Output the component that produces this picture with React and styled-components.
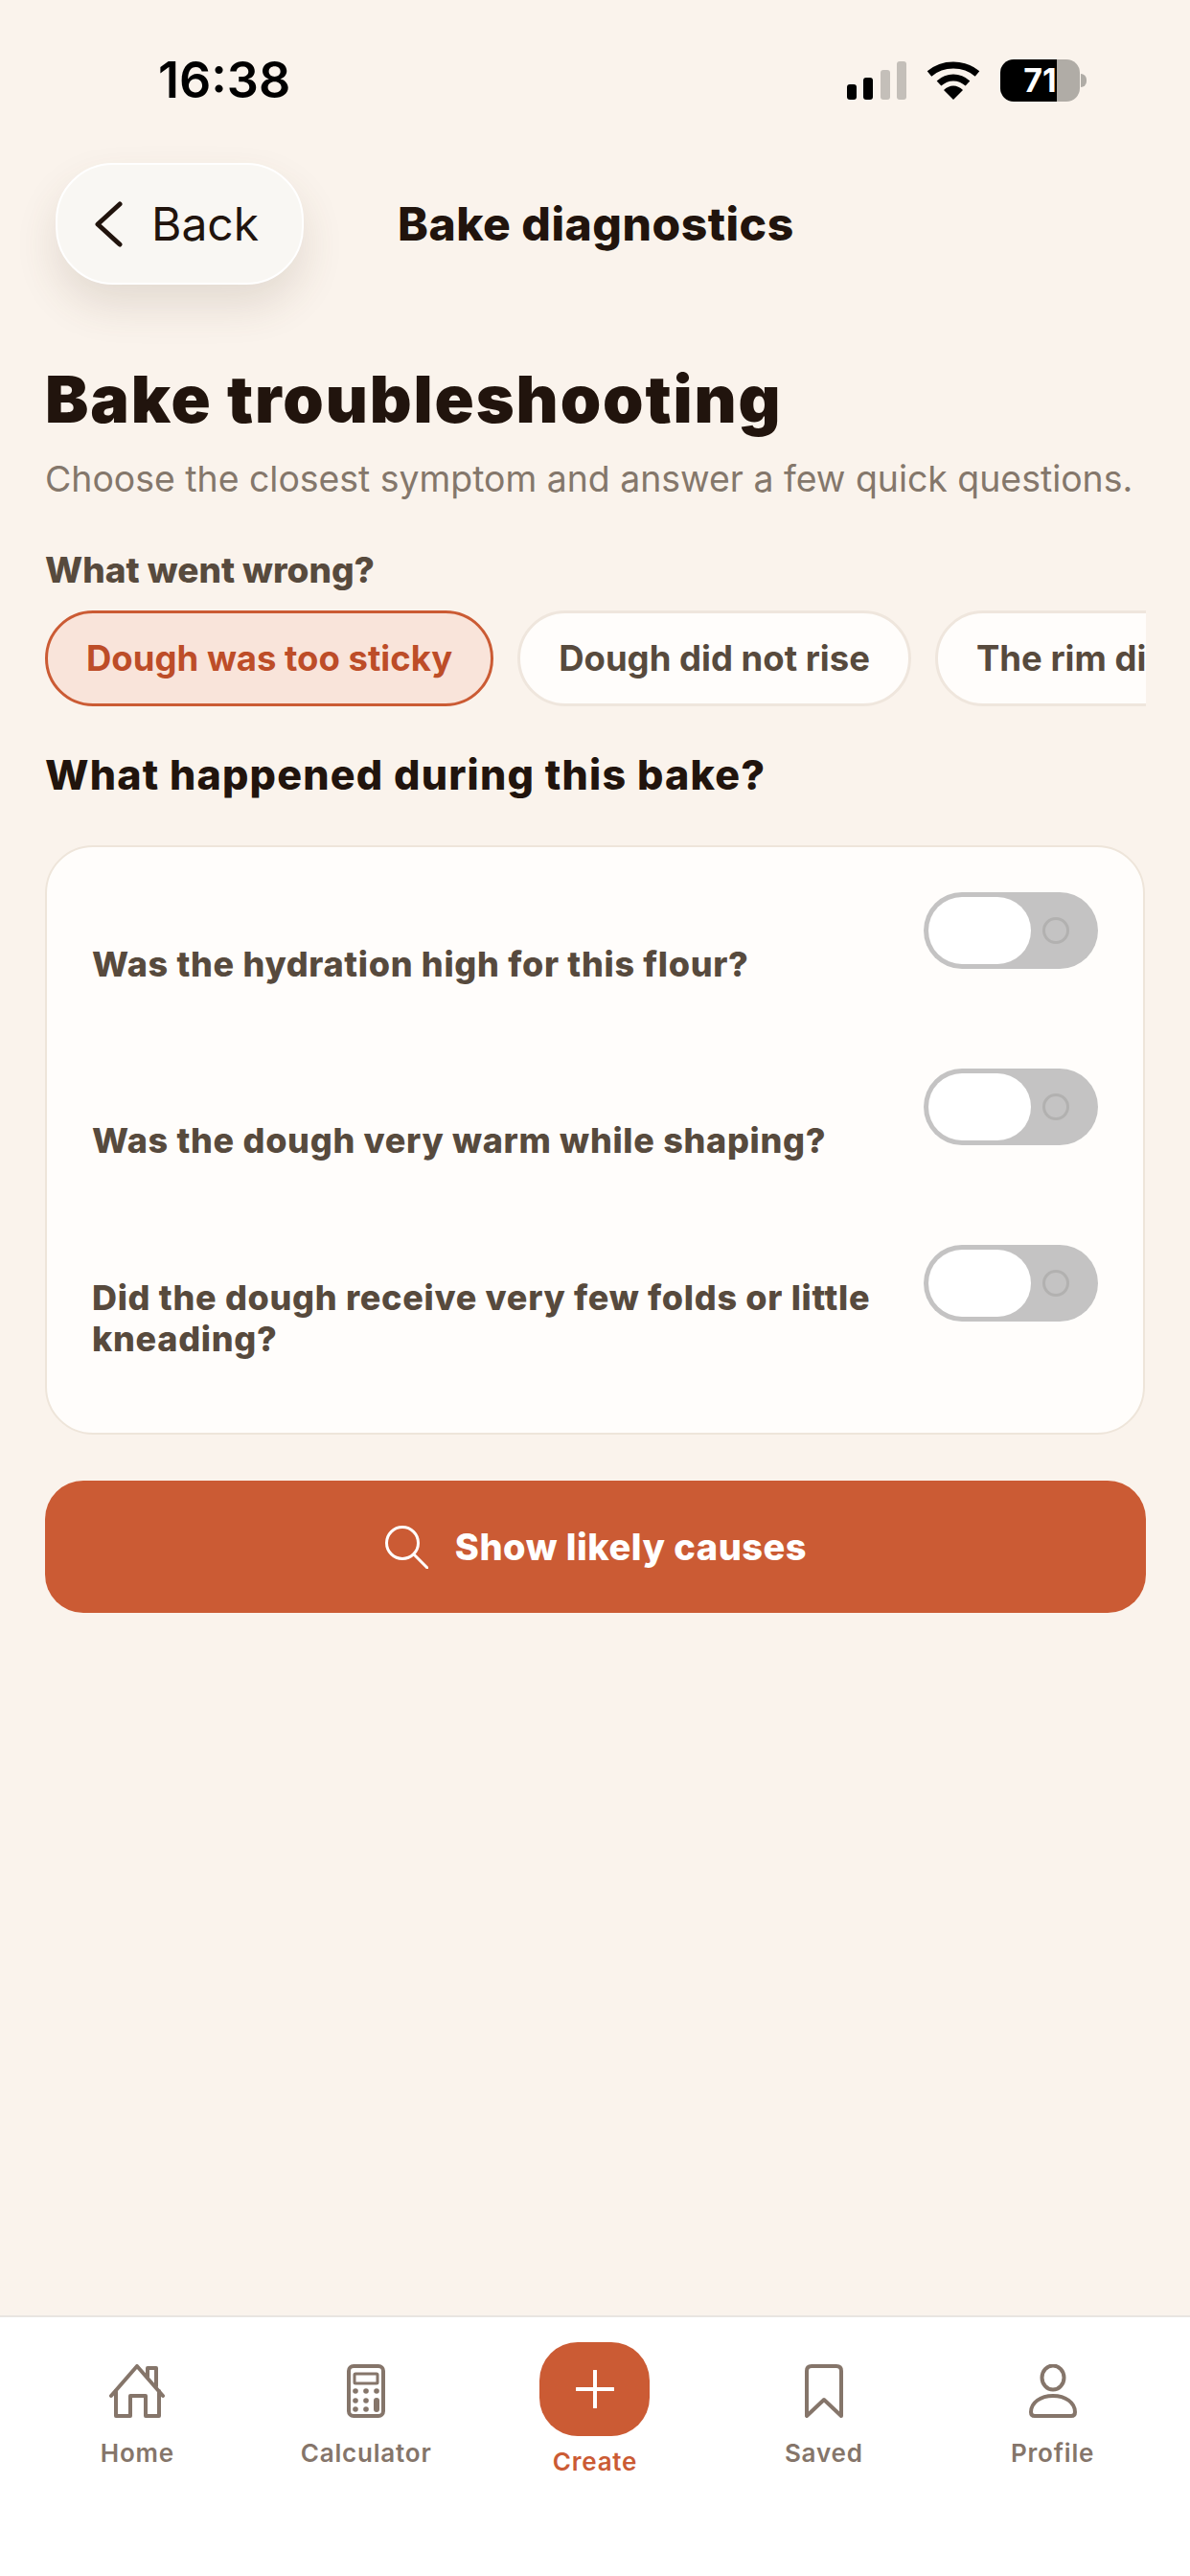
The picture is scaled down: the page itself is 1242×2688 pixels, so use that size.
import React from "react";
import styled, { createGlobalStyle } from "styled-components";

const GlobalStyle = createGlobalStyle`
  html, body {
    margin: 0;
    padding: 0;
    background: #faf3ec;
  }
  * {
    box-sizing: border-box;
  }
`;

const questions = [
  { text: "Was the hydration high for this flour?", top: 54 },
  { text: "Was the dough very warm while shaping?", top: 54 },
  { text: "Did the dough receive very few folds or little kneading?", top: 34 },
];

const App = () => {
  return (
    <Page>
      <GlobalStyle />
      <StatusBar>
        <Time>16:38</Time>
        <StatusIcons>
          <svg width="62" height="40" viewBox="0 0 62 40">
            <rect x="0" y="24" width="10" height="16" rx="3" fill="#000" />
            <rect x="17" y="17" width="10" height="23" rx="3" fill="#000" />
            <rect x="35" y="9" width="10" height="31" rx="3" fill="#c4bfb9" />
            <rect x="52" y="0" width="10" height="40" rx="3" fill="#c4bfb9" />
          </svg>
          <svg width="56" height="40" viewBox="0 0 56 40">
            <path d="M3 13 C17 1 39 1 53 13" fill="none" stroke="#000" strokeWidth="7" />
            <path d="M13 23 C22 15 34 15 43 23" fill="none" stroke="#000" strokeWidth="7" />
            <path d="M18 30 C24 24 32 24 38 30 L28 40 Z" fill="#000" />
          </svg>
          <Battery>
            71
            <BatteryNub />
          </Battery>
        </StatusIcons>
      </StatusBar>

      <Header>
        <BackButton>
          <svg width="30" height="48" viewBox="0 0 30 48">
            <path
              d="M27 3 L4 24 L27 45"
              fill="none"
              stroke="#21140d"
              strokeWidth="5"
              strokeLinecap="round"
              strokeLinejoin="round"
            />
          </svg>
          Back
        </BackButton>
        <HeaderTitle>Bake diagnostics</HeaderTitle>
      </Header>

      <Main>
        <Heading>Bake troubleshooting</Heading>
        <Subtitle>Choose the closest symptom and answer a few quick questions.</Subtitle>
        <FieldLabel>What went wrong?</FieldLabel>
        <ChipRow>
          <Chip $active>Dough was too sticky</Chip>
          <Chip>Dough did not rise</Chip>
          <Chip>The rim did not brown</Chip>
        </ChipRow>
        <SectionTitle>What happened during this bake?</SectionTitle>
        <Card>
          {questions.map((q) => (
            <QuestionRow key={q.text}>
              <QuestionText $top={q.top}>{q.text}</QuestionText>
              <Toggle>
                <Knob />
                <OffDot />
              </Toggle>
            </QuestionRow>
          ))}
        </Card>
        <PrimaryButton>
          <svg width="46" height="46" viewBox="0 0 46 46">
            <circle cx="19" cy="19" r="16.5" fill="none" stroke="#fff" strokeWidth="3" />
            <path d="M31 31 L45 45" stroke="#fff" strokeWidth="3" strokeLinecap="round" />
          </svg>
          Show likely causes
        </PrimaryButton>
      </Main>

      <TabBar>
        <Tab>
          <svg width="60" height="56" viewBox="0 0 60 56" fill="none" stroke="#85756a" strokeWidth="4" strokeLinecap="round" strokeLinejoin="round">
            <path d="M3 33 L30 2 L57 33" />
            <path d="M8 28 V54 H23 V33 H39 V54 H53 V28" />
            <path d="M41 13 V4 H50 V23" />
          </svg>
          <TabLabel>Home</TabLabel>
        </Tab>
        <Tab>
          <svg width="40" height="56" viewBox="0 0 40 56" fill="none" stroke="#85756a" strokeWidth="4" strokeLinejoin="round">
            <rect x="2" y="2" width="36" height="52" rx="5" />
            <rect x="8" y="10" width="24" height="10" rx="1" strokeWidth="3" />
            <g fill="#85756a" stroke="none">
              <circle cx="9" cy="28" r="2.8" />
              <circle cx="20" cy="28" r="2.8" />
              <circle cx="31" cy="28" r="2.8" />
              <circle cx="9" cy="38" r="2.8" />
              <circle cx="20" cy="38" r="2.8" />
              <circle cx="9" cy="47" r="2.8" />
              <circle cx="20" cy="47" r="2.8" />
              <rect x="28" y="35" width="6" height="15" rx="3" />
            </g>
          </svg>
          <TabLabel>Calculator</TabLabel>
        </Tab>
        <Tab>
          <CreateButton>
            <svg width="40" height="40" viewBox="0 0 40 40">
              <path d="M20 1 V39 M1 20 H39" stroke="#fff" strokeWidth="4" strokeLinecap="round" />
            </svg>
          </CreateButton>
          <TabLabel $active>Create</TabLabel>
        </Tab>
        <Tab>
          <svg width="40" height="56" viewBox="0 0 40 56" fill="none" stroke="#85756a" strokeWidth="4" strokeLinejoin="round">
            <path d="M2 54 V7 Q2 2 7 2 H33 Q38 2 38 7 V54 L20 37 Z" />
          </svg>
          <TabLabel>Saved</TabLabel>
        </Tab>
        <Tab>
          <svg width="52" height="56" viewBox="0 0 52 56" fill="none" stroke="#85756a" strokeWidth="4" strokeLinejoin="round">
            <ellipse cx="26" cy="14" rx="11.5" ry="12.5" />
            <path d="M3 50 C3 40 13 33 26 33 C39 33 49 40 49 50 Q49 54 45 54 H7 Q3 54 3 50 Z" />
          </svg>
          <TabLabel>Profile</TabLabel>
        </Tab>
      </TabBar>
    </Page>
  );
};

export default App;

const Page = styled.div`
  display: flex;
  flex-direction: column;
  width: 1242px;
  height: 2688px;
  overflow: hidden;
  background: #faf3ec;
  color: #21140d;
  font-family: Inter, "Liberation Sans", sans-serif;
`;

const StatusBar = styled.div`
  display: flex;
  align-items: center;
  justify-content: space-between;
  height: 170px;
  padding: 0 115px 2px 165px;
  flex-shrink: 0;
`;

const Time = styled.div`
  font-size: 52px;
  font-weight: 600;
  line-height: 60px;
  color: #000;
`;

const StatusIcons = styled.div`
  display: flex;
  align-items: center;
  gap: 21px;
`;

const Battery = styled.div`
  position: relative;
  width: 83px;
  height: 44px;
  border-radius: 14px;
  background: linear-gradient(90deg, #000 71%, #b0aca6 71%);
  color: #fff;
  font-size: 34px;
  font-weight: 700;
  line-height: 44px;
  text-align: center;
`;

const BatteryNub = styled.span`
  position: absolute;
  top: 15px;
  right: -7px;
  width: 6px;
  height: 14px;
  border-radius: 0 6px 6px 0;
  background: #b0aca6;
`;

const Header = styled.div`
  display: flex;
  align-items: center;
  gap: 98px;
  padding-left: 58px;
  flex-shrink: 0;
`;

const BackButton = styled.div`
  display: flex;
  align-items: center;
  gap: 30px;
  width: 259px;
  height: 127px;
  padding-left: 38px;
  border: 2px solid #fff;
  border-radius: 60px;
  background: #f9f7f3;
  box-shadow: 0 22px 44px rgba(90, 70, 50, 0.14);
  font-size: 48px;
  font-weight: 400;
  color: #21140d;
`;

const HeaderTitle = styled.div`
  font-size: 48px;
  font-weight: 800;
  line-height: 60px;
  letter-spacing: 0.5px;
`;

const Main = styled.main`
  display: flex;
  flex-direction: column;
  flex: 1;
  padding: 79px 46px 0 47px;
`;

const Heading = styled.h1`
  margin: 0;
  font-size: 68px;
  font-weight: 900;
  line-height: 80px;
  letter-spacing: 1.9px;
`;

const Subtitle = styled.p`
  margin: 19px 0 0;
  font-size: 37.4px;
  font-weight: 400;
  line-height: 50px;
  color: #84776b;
  white-space: nowrap;
`;

const FieldLabel = styled.div`
  margin-top: 47px;
  font-size: 37px;
  font-weight: 800;
  line-height: 46px;
  color: #574a3d;
`;

const ChipRow = styled.div`
  display: flex;
  gap: 25px;
  margin-top: 19px;
  overflow: hidden;
`;

const Chip = styled.div`
  flex-shrink: 0;
  height: 100px;
  padding: 0 40px;
  border: 3px solid ${(p) => (p.$active ? "#cb5b34" : "#efe6dd")};
  border-radius: 50px;
  background: ${(p) => (p.$active ? "#f9e4da" : "#fffdfb")};
  color: ${(p) => (p.$active ? "#bd4d28" : "#574a3d")};
  font-size: 36.5px;
  font-weight: 700;
  line-height: 94px;
  white-space: nowrap;
`;

const SectionTitle = styled.h2`
  margin: 46px 0 0;
  font-size: 43px;
  font-weight: 800;
  line-height: 50px;
  letter-spacing: 1.2px;
`;

const Card = styled.div`
  display: flex;
  flex-direction: column;
  gap: 87px;
  margin: 49px 1px 0 0;
  padding: 47px 47px 76px;
  border: 2px solid #eee5da;
  border-radius: 50px;
  background: #fffdfb;
`;

const QuestionRow = styled.div`
  display: flex;
  align-items: flex-start;
  justify-content: space-between;
`;

const QuestionText = styled.div`
  width: 830px;
  padding-top: ${(p) => p.$top}px;
  font-size: 36px;
  font-weight: 800;
  line-height: 43px;
  letter-spacing: 0.7px;
  color: #574a3d;
`;

const Toggle = styled.div`
  display: flex;
  align-items: center;
  gap: 12px;
  flex-shrink: 0;
  width: 182px;
  height: 80px;
  padding: 5px;
  border-radius: 40px;
  background: #c4c3c3;
`;

const Knob = styled.span`
  width: 107px;
  height: 70px;
  border-radius: 35px;
  background: #fff;
`;

const OffDot = styled.span`
  width: 28px;
  height: 28px;
  border: 3px solid #b2b1b0;
  border-radius: 50%;
`;

const PrimaryButton = styled.div`
  display: flex;
  align-items: center;
  justify-content: center;
  gap: 28px;
  height: 138px;
  margin-top: 48px;
  border-radius: 40px;
  background: #cb5b34;
  color: #fff;
  font-size: 38px;
  font-weight: 800;
  letter-spacing: 0.5px;
`;

const TabBar = styled.nav`
  display: grid;
  grid-template-columns: repeat(5, 1fr);
  align-items: start;
  height: 272px;
  padding: 0 24px;
  border-top: 2px solid #e9e5e1;
  background: #fff;
  flex-shrink: 0;
`;

const Tab = styled.div`
  display: flex;
  flex-direction: column;
  align-items: center;
  justify-content: flex-end;
  height: 158px;
`;

const TabLabel = styled.span`
  margin-top: ${(p) => (p.$active ? "11px" : "21px")};
  margin-bottom: ${(p) => (p.$active ? "-9px" : "0")};
  font-size: 26px;
  font-weight: 600;
  line-height: 32px;
  letter-spacing: 0.8px;
  color: ${(p) => (p.$active ? "#cb5b34" : "#85756a")};
`;

const CreateButton = styled.div`
  display: flex;
  align-items: center;
  justify-content: center;
  width: 115px;
  height: 98px;
  border-radius: 40px;
  background: #cb5b34;
`;
